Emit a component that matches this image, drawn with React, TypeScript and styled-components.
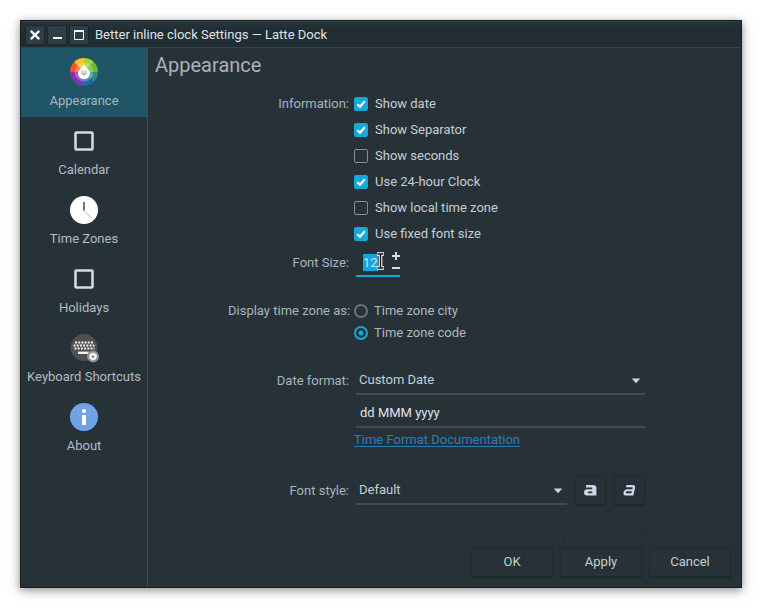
import React, { useEffect, useRef } from 'react';
import styled, { createGlobalStyle } from 'styled-components';

const color = {
  bg: '#273238',
  bar: '#222d33',
  line: '#414c52',
  label: '#a9b3ba',
  text: '#c6ced3',
  bright: '#dfe4e7',
  accent: '#12a8db',
  link: '#2980b9',
};

const GlobalStyle = createGlobalStyle`
  * { box-sizing: border-box; }
  body {
    margin: 0;
    background: #fff;
    color: ${color.text};
    font: 13px/16px Roboto, sans-serif;
  }
  button, input, select { font: inherit; color: inherit; margin: 0; }
`;

const Page = styled.div`
  display: flex;
  min-height: 100vh;
  padding: 20px;
`;

const Window = styled.main`
  flex: 1;
  display: flex;
  flex-direction: column;
  background: ${color.bg};
  border: 1px solid #161e22;
  box-shadow: 0 2px 8px rgba(0, 0, 0, 0.4), 0 4px 18px rgba(0, 0, 0, 0.1);
`;

const TitleBar = styled.header`
  display: flex;
  align-items: center;
  gap: 2px;
  height: 27px;
  padding: 1px 4px 0;
  background: linear-gradient(#26333a, ${color.bar} 8px);
  border-top: 1px solid #2f4247;
  border-bottom: 1px solid #34454b;
`;

const WindowButton = styled.button`
  display: flex;
  align-items: center;
  justify-content: center;
  width: 20px;
  height: 20px;
  padding: 0;
  border: 1px solid #1c262b;
  border-radius: 2px;
  background: #2f3e45;
`;

const WindowTitle = styled.h1`
  margin: 0 0 0 4px;
  font-size: 13px;
  font-weight: 400;
  line-height: 20px;
  color: ${color.bright};
`;

const Body = styled.div`
  flex: 1;
  display: flex;
`;

const Sidebar = styled.nav`
  display: flex;
  flex-direction: column;
  width: 127px;
  border-right: 1px solid ${color.line};
`;

const NavItem = styled.button<{ $active?: boolean }>`
  display: flex;
  flex-direction: column;
  align-items: center;
  gap: 7px;
  height: 69px;
  padding: 10px 0 0;
  border: 0;
  background: ${(p) => (p.$active ? '#205567' : 'transparent')};
  color: ${(p) => (p.$active ? '#a6b6be' : '#b3bac2')};
  white-space: nowrap;

  svg { display: block; }
`;

const Content = styled.section`
  flex: 1;
  display: flex;
  flex-direction: column;
  padding: 5px 10px 10px 7px;
`;

const Heading = styled.h2`
  margin: 0 0 14px;
  font-size: 20px;
  font-weight: 400;
  line-height: 24px;
  color: ${color.label};
`;

const Form = styled.form`
  display: grid;
  grid-template-columns: 121px minmax(0, 291px);
  column-gap: 5px;
  justify-content: center;
  padding-right: 13px;
`;

const RowLabel = styled.label<{ $height: number; $gap?: number }>`
  margin-top: ${(p) => p.$gap ?? 0}px;
  line-height: ${(p) => p.$height}px;
  text-align: right;
  white-space: nowrap;
  color: ${color.label};
`;

const Field = styled.div<{ $gap?: number }>`
  display: flex;
  flex-direction: column;
  align-items: flex-start;
  margin-top: ${(p) => p.$gap ?? 0}px;
`;

const Choice = styled.label<{ $height: number; $muted?: boolean }>`
  display: flex;
  align-items: center;
  gap: ${(p) => (p.$muted ? 6 : 7)}px;
  height: ${(p) => p.$height}px;
  color: ${(p) => (p.$muted ? '#b0b8be' : color.text)};
`;

const CheckInput = styled.input`
  appearance: none;
  width: 14px;
  height: 14px;
  border: 1px solid #858d92;
  border-radius: 2px;

  &:checked {
    border-color: ${color.accent};
    background: ${color.accent}
      url("data:image/svg+xml,%3Csvg xmlns='http://www.w3.org/2000/svg' viewBox='0 0 12 12'%3E%3Cpath d='M2.3 6.2 5 8.7 9.8 3.2' fill='none' stroke='white' stroke-width='2.2'/%3E%3C/svg%3E")
      center / 12px 12px no-repeat;
  }
`;

const RadioInput = styled.input`
  appearance: none;
  width: 14px;
  height: 14px;
  border: 2px solid #687277;
  border-radius: 50%;

  &:checked {
    border-color: ${color.accent};
    background: radial-gradient(circle, ${color.accent} 2px, transparent 3px);
  }
`;

const Spinner = styled.div`
  position: relative;
  display: flex;
  justify-content: space-between;
  width: 44px;
  height: 29px;
  margin: 1px 0 0 2px;
  padding: 6px 0 4px 7px;
  border-bottom: 2px solid ${color.accent};
`;

const SpinInput = styled.input`
  width: 20px;
  height: 17px;
  padding: 0;
  border: 0;
  outline: 0;
  background: transparent;
  line-height: 17px;

  &::selection {
    background: ${color.accent};
    color: #c9e4ee;
  }
`;

const Steps = styled.div`
  display: flex;
  flex-direction: column;
  gap: 4px;
  margin-top: -2px;
`;

const StepButton = styled.button`
  display: flex;
  justify-content: center;
  width: 8px;
  height: 8px;
  padding: 0;
  border: 0;
  background: none;

  svg { flex: none; }
`;

const Pointer = styled.svg`
  position: absolute;
  left: 20px;
  top: 4px;
  pointer-events: none;
`;

const SelectBox = styled.div<{ $grow?: boolean }>`
  position: relative;
  display: flex;
  flex: ${(p) => (p.$grow ? '1' : 'none')};
  align-self: ${(p) => (p.$grow ? 'flex-end' : 'stretch')};
  margin-left: 2px;

  svg {
    position: absolute;
    right: 4px;
    top: 12px;
    pointer-events: none;
  }
`;

const Select = styled.select`
  appearance: none;
  flex: 1;
  height: 29px;
  padding: 1px 16px 0 3px;
  border: 0;
  border-bottom: 2px solid ${color.line};
  border-radius: 0;
  outline: 0;
  background: transparent;

  option { background: ${color.bg}; }
`;

const TextInput = styled.input`
  align-self: stretch;
  height: 29px;
  margin: 4px 0 3px 2px;
  padding: 0 4px;
  border: 0;
  border-bottom: 2px solid ${color.line};
  outline: 0;
  background: transparent;
  color: ${color.bright};
`;

const DocLink = styled.a`
  line-height: 18px;
  color: ${color.link};
  text-underline-offset: 2px;
`;

const StyleRow = styled.div`
  display: flex;
  align-self: stretch;
  gap: 8px;
`;

const PushButton = styled.button`
  position: relative;
  display: flex;
  align-items: center;
  justify-content: center;
  width: 82px;
  height: 30px;
  padding: 0;
  border: 1px solid #222b30;
  border-radius: 2px;
  background: ${color.bg};
  box-shadow: 0 1px 1px #1d262a;
`;

const ToolButton = styled(PushButton)`
  width: 31px;
`;

const ApplyButton = styled(PushButton)`
  &::before {
    content: '';
    position: absolute;
    left: 3px;
    right: -5px;
    top: -14px;
    height: 7px;
    border: 1px solid #232c31;
    border-bottom: 0;
    border-radius: 2px 2px 0 0;
  }
`;

const Footer = styled.footer`
  display: flex;
  justify-content: flex-end;
  gap: 7px;
  margin-top: auto;
`;

const wheel = ['#a4d43c', '#6cb92f', '#2a8a86', '#1a68a8', '#6b3fb5', '#9129ad', '#f4511e', '#fdc02f'];

function wedge(i: number, r: number) {
  const at = (k: number) => {
    const a = ((k * 45 - 90) * Math.PI) / 180;
    return `${(14 + r * Math.cos(a)).toFixed(2)} ${(14 + r * Math.sin(a)).toFixed(2)}`;
  };
  return `M14 14L${at(i)}A${r} ${r} 0 0 1 ${at(i + 1)}Z`;
}

const AppearanceIcon = () => (
  <svg width="28" height="28" viewBox="0 0 28 28" aria-hidden="true">
    {wheel.map((c, i) => (
      <path key={c} d={wedge(i, 14)} fill={c} />
    ))}
    <circle cx="14" cy="14" r="9.5" fill="#fff" fillOpacity=".25" />
    <path d="M14 6.2C15.5 9.6 20 11.6 20 15.2a6 6 0 0 1-12 0C8 11.6 12.5 9.6 14 6.2Z" fill="#fff" />
    <g opacity=".4" transform="translate(14 14.5) scale(.22) translate(-14 -14)">
      {wheel.map((c, i) => (
        <path key={c} d={wedge(i, 14)} fill={c} />
      ))}
    </g>
  </svg>
);

const SquareIcon = () => (
  <svg width="28" height="28" viewBox="0 0 28 28" aria-hidden="true">
    <rect x="5.5" y="5.5" width="17" height="17" rx="1" fill="none" stroke="#cfdde2" strokeWidth="2.6" />
  </svg>
);

const ClockIcon = () => (
  <svg width="28" height="28" viewBox="0 0 28 28" aria-hidden="true">
    <circle cx="14" cy="14" r="14" fill="#fff" />
    <path d="M14 14.5 21.5 22" stroke="#cf8b8b" strokeWidth=".8" />
    <path d="M14 6v8.5" stroke="#747474" strokeWidth="2" />
  </svg>
);

const KeyboardIcon = () => (
  <svg width="28" height="28" viewBox="0 0 28 28" overflow="visible" aria-hidden="true">
    <circle cx="14" cy="13.5" r="13.5" fill="#4f4f4f" />
    <g stroke="#f2f2f2" strokeWidth="2">
      <path d="M5 8.5h18" strokeDasharray="2 1.2" />
      <path d="M3.5 11.5h21" strokeDasharray="2 1.2" />
      <path d="M4.5 14.5h20" strokeDasharray="2 1.2" />
      <path d="M8 18.8h11" strokeWidth="2.4" />
    </g>
    <circle cx="23" cy="22.5" r="6" fill="#8e8e8e" />
    <circle cx="23" cy="22.5" r="2.4" fill="none" stroke="#fff" strokeWidth="1.7" />
    <circle cx="23" cy="22.5" r="3.6" fill="none" stroke="#fff" strokeWidth="1" strokeDasharray="1.6 1.23" />
  </svg>
);

const AboutIcon = () => (
  <svg width="28" height="28" viewBox="0 0 28 28" aria-hidden="true">
    <circle cx="14" cy="14" r="14" fill="#6fa3e6" />
    <circle cx="14" cy="8" r="2.1" fill="#fff" />
    <path d="M12 12h4v10h-4z" fill="#fff" />
  </svg>
);

const Arrow = () => (
  <svg width="10" height="6" viewBox="0 0 10 6" aria-hidden="true">
    <path d="M.8.5h8.4L5 5.2Z" fill="#cfd8dc" />
  </svg>
);

const BoldIcon = () => (
  <svg width="13" height="11" viewBox="0 0 13 11" aria-hidden="true">
    <path
      d="M2 0H9Q12.4 0 12.4 3V10.6H3Q0 10.6 0 7.6T3 4.3H8.2V2.6H2ZM4.6 6.6Q3.8 6.6 3.8 7.4T4.6 8.2H8.2V6.6Z"
      fill="#cdd6ea"
      fillRule="evenodd"
    />
  </svg>
);

const ItalicIcon = () => (
  <svg width="13" height="11" viewBox="0 0 13 11" aria-hidden="true">
    <path
      d="M3.4 0H9.8Q12.6 0 12 3L10.4 10.4H2.4Q0 10.4.5 7.6T3.8 4.3H9.4L9.7 2.2H3ZM4 6.3Q3.1 6.3 2.9 7.3T3.6 8.3H8.4L8.9 6.3Z"
      fill="#cdd6ea"
      fillRule="evenodd"
    />
  </svg>
);

const pages = [
  { name: 'Appearance', Icon: AppearanceIcon },
  { name: 'Calendar', Icon: SquareIcon },
  { name: 'Time Zones', Icon: ClockIcon },
  { name: 'Holidays', Icon: SquareIcon },
  { name: 'Keyboard Shortcuts', Icon: KeyboardIcon },
  { name: 'About', Icon: AboutIcon },
];

const options: [string, boolean][] = [
  ['Show date', true],
  ['Show Separator', true],
  ['Show seconds', false],
  ['Use 24-hour Clock', true],
  ['Show local time zone', false],
  ['Use fixed font size', true],
];

export default function App() {
  const sizeRef = useRef<HTMLInputElement>(null);

  useEffect(() => {
    sizeRef.current?.focus();
    sizeRef.current?.select();
  }, []);

  return (
    <Page>
      <GlobalStyle />
      <Window>
        <TitleBar>
          <WindowButton aria-label="Close">
            <svg width="10" height="10" viewBox="0 0 10 10">
              <path d="M.8.8 9.2 9.2M9.2.8.8 9.2" stroke="#f2f5f5" strokeWidth="2.3" />
            </svg>
          </WindowButton>
          <WindowButton aria-label="Minimize">
            <svg width="10" height="10" viewBox="0 0 10 10">
              <path d="M1 8h9" stroke="#f2f5f5" strokeWidth="2" />
            </svg>
          </WindowButton>
          <WindowButton aria-label="Maximize">
            <svg width="10" height="10" viewBox="0 0 10 10">
              <path d="M.5 1v8.5h9V1" fill="none" stroke="#f2f5f5" />
              <path d="M0 1h10" stroke="#f2f5f5" strokeWidth="2" />
            </svg>
          </WindowButton>
          <WindowTitle>Better inline clock Settings — Latte Dock</WindowTitle>
        </TitleBar>
        <Body>
          <Sidebar>
            {pages.map(({ name, Icon }, i) => (
              <NavItem key={name} type="button" $active={i === 0}>
                <Icon />
                {name}
              </NavItem>
            ))}
          </Sidebar>
          <Content>
            <Heading>Appearance</Heading>
            <Form id="appearance" onSubmit={(e) => e.preventDefault()}>
              <RowLabel as="span" $height={26}>Information:</RowLabel>
              <Field>
                {options.map(([text, on]) => (
                  <Choice key={text} $height={26}>
                    <CheckInput type="checkbox" defaultChecked={on} />
                    {text}
                  </Choice>
                ))}
              </Field>

              <RowLabel htmlFor="size" $height={32}>Font Size:</RowLabel>
              <Field>
                <Spinner>
                  <SpinInput id="size" ref={sizeRef} inputMode="numeric" defaultValue="12" />
                  <Steps>
                    <StepButton type="button" aria-label="Increase">
                      <svg width="8" height="8" viewBox="0 0 8 8">
                        <path d="M0 4h8M4 0v8" stroke="#d5dee2" strokeWidth="2" />
                      </svg>
                    </StepButton>
                    <StepButton type="button" aria-label="Decrease">
                      <svg width="8" height="8" viewBox="0 0 8 8">
                        <path d="M0 4h8" stroke="#d5dee2" strokeWidth="2" />
                      </svg>
                    </StepButton>
                  </Steps>
                  <Pointer width="9" height="18" viewBox="0 0 9 18" aria-hidden="true">
                    <path d="M1 2h7M1 16h7M4.5 2v14" stroke="#fff" strokeWidth="3.6" />
                    <path d="M1.5 2h6M1.5 16h6M4.5 2v14" stroke="#111" strokeWidth="1.4" />
                  </Pointer>
                </Spinner>
              </Field>

              <RowLabel as="span" $height={22} $gap={21}>Display time zone as:</RowLabel>
              <Field $gap={21}>
                <Choice $height={22} $muted>
                  <RadioInput type="radio" name="zone" />
                  Time zone city
                </Choice>
                <Choice $height={22} $muted>
                  <RadioInput type="radio" name="zone" defaultChecked />
                  Time zone code
                </Choice>
              </Field>

              <RowLabel htmlFor="format" $height={29} $gap={22}>Date format:</RowLabel>
              <Field $gap={22}>
                <SelectBox>
                  <Select id="format">
                    <option>Custom Date</option>
                  </Select>
                  <Arrow />
                </SelectBox>
                <TextInput aria-label="Custom date format" defaultValue="dd MMM yyyy" />
                <DocLink href="#documentation">Time Format Documentation</DocLink>
              </Field>

              <RowLabel htmlFor="style" $height={32} $gap={26}>Font style:</RowLabel>
              <Field $gap={26}>
                <StyleRow>
                  <SelectBox $grow>
                    <Select id="style">
                      <option>Default</option>
                    </Select>
                    <Arrow />
                  </SelectBox>
                  <ToolButton type="button" aria-label="Bold"><BoldIcon /></ToolButton>
                  <ToolButton type="button" aria-label="Italic"><ItalicIcon /></ToolButton>
                </StyleRow>
              </Field>
            </Form>
            <Footer>
              <PushButton type="submit" form="appearance">OK</PushButton>
              <ApplyButton type="button">Apply</ApplyButton>
              <PushButton type="button">Cancel</PushButton>
            </Footer>
          </Content>
        </Body>
      </Window>
    </Page>
  );
}
